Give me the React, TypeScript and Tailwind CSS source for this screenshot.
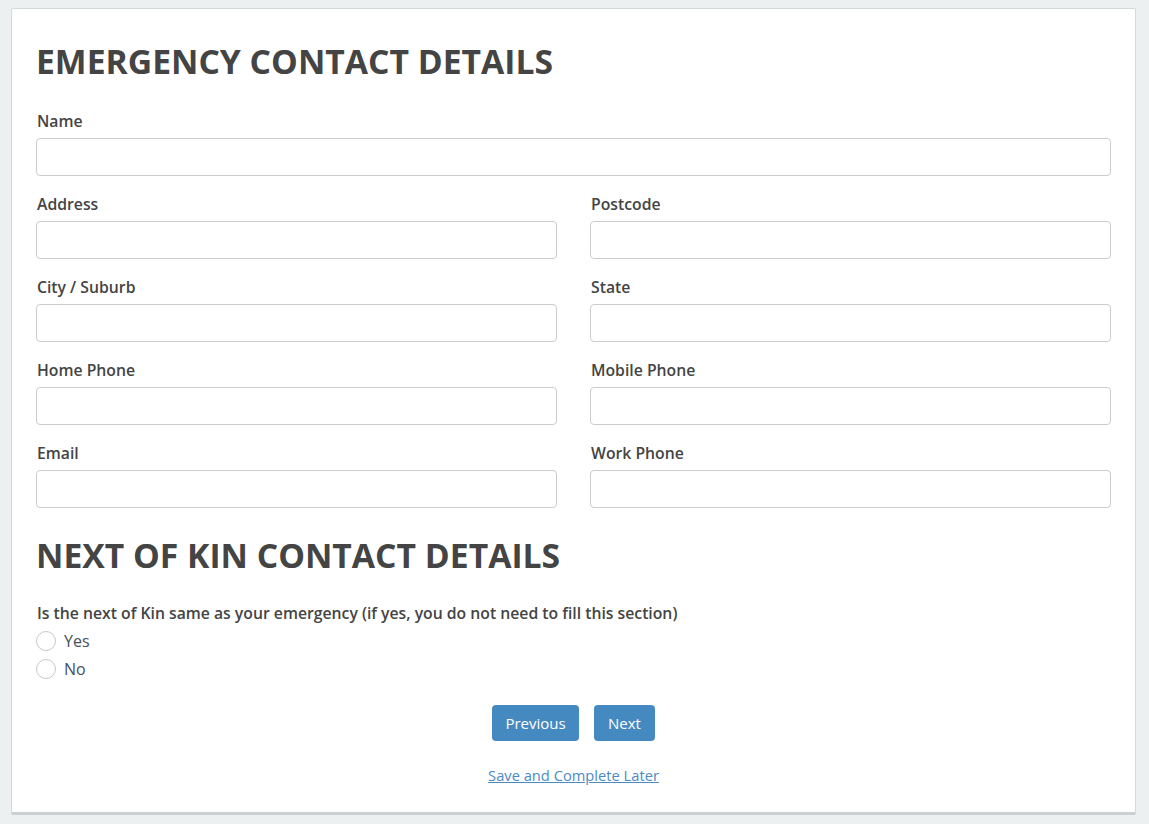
import React from "react";

const font = { fontFamily: '"Open Sans", "Noto Sans", sans-serif' };

function Field({ label }: { label: string }) {
  return (
    <div className="mb-[16px]">
      <label className="block pl-[1px] text-[15.75px] leading-[24px] font-semibold text-[#444] mb-[5px]">{label}</label>
      <input type="text" className="block w-full h-[38px] rounded-[4px] border border-[#ccc] bg-white outline-none px-3" />
    </div>
  );
}

function Radio({ label }: { label: string }) {
  return (
    <label className="flex items-center gap-[8px] h-[28px]">
      <span className="w-[20px] h-[20px] rounded-full border border-[#c8c8c8] bg-white shrink-0" />
      <span className="text-[16px] text-[#46505e]">{label}</span>
    </label>
  );
}

export default function App() {
  return (
    <div className="min-h-[824px] bg-[#ecf0f1] pt-[8px] pl-[11px]" style={font}>
      <div className="w-[1125px] h-[807px] bg-white border border-[#d3dadc] border-b-[3px] border-b-[#c9d1d3] rounded-[2px] px-[24px] pt-[33px]">
        <h1 className="text-[33.7px] leading-[38.5px] font-bold text-[#444] mb-[28px]">EMERGENCY CONTACT DETAILS</h1>
        <Field label="Name" />
        <div className="grid grid-cols-2 gap-x-[33px]">
          <Field label="Address" />
          <Field label="Postcode" />
          <Field label="City / Suburb" />
          <Field label="State" />
          <Field label="Home Phone" />
          <Field label="Mobile Phone" />
          <Field label="Email" />
          <Field label="Work Phone" />
        </div>
        <h2 className="mt-[12px] text-[33.7px] leading-[38.5px] font-bold text-[#444] mb-[27px]">NEXT OF KIN CONTACT DETAILS</h2>
        <p className="pl-[1px] text-[15.75px] leading-[24px] font-semibold text-[#444]">
          Is the next of Kin same as your emergency (if yes, you do not need to fill this section)
        </p>
        <div className="flex flex-col mt-[2px]">
          <Radio label="Yes" />
          <Radio label="No" />
        </div>
        <div className="flex justify-center gap-[15px] mt-[22px]">
          <button className="h-[36px] w-[87px] rounded-[4px] bg-[#4589c1] text-white text-[15px]">Previous</button>
          <button className="h-[36px] w-[61px] rounded-[4px] bg-[#4589c1] text-white text-[15px]">Next</button>
        </div>
        <div className="flex justify-center mt-[23px]">
          <a href="#" className="text-[14.7px] text-[#4a8bc4] underline">Save and Complete Later</a>
        </div>
      </div>
    </div>
  );
}
